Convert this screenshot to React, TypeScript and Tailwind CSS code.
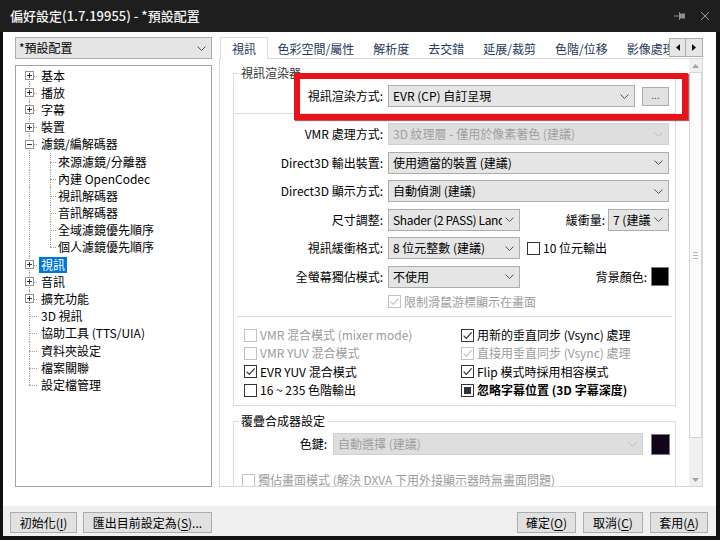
import clsx from "clsx";
import type { ReactNode } from "react";

type CheckState = "off" | "on" | "mixed";

type TreeRow = {
  label: string;
  level: 0 | 1;
  toggle?: "+" | "-";
  selected?: boolean;
  lastChild?: boolean;
};

const TREE: TreeRow[] = [
  { label: "基本", level: 0, toggle: "+" },
  { label: "播放", level: 0, toggle: "+" },
  { label: "字幕", level: 0, toggle: "+" },
  { label: "裝置", level: 0, toggle: "+" },
  { label: "濾鏡/編解碼器", level: 0, toggle: "-" },
  { label: "來源濾鏡/分離器", level: 1 },
  { label: "內建 OpenCodec", level: 1 },
  { label: "視訊解碼器", level: 1 },
  { label: "音訊解碼器", level: 1 },
  { label: "全域濾鏡優先順序", level: 1 },
  { label: "個人濾鏡優先順序", level: 1, lastChild: true },
  { label: "視訊", level: 0, toggle: "+", selected: true },
  { label: "音訊", level: 0, toggle: "+" },
  { label: "擴充功能", level: 0, toggle: "+" },
  { label: "3D 視訊", level: 0 },
  { label: "協助工具 (TTS/UIA)", level: 0 },
  { label: "資料夾設定", level: 0 },
  { label: "檔案關聯", level: 0 },
  { label: "設定檔管理", level: 0 },
];

const TABS = ["色彩空間/屬性", "解析度", "去交錯", "延展/裁剪", "色階/位移", "影像處理"];

const CHECKS: { label: string; state: CheckState; disabled?: boolean; bold?: boolean }[] = [
  { label: "VMR 混合模式 (mixer mode)", state: "off", disabled: true },
  { label: "用新的垂直同步 (Vsync) 處理", state: "on" },
  { label: "VMR YUV 混合模式", state: "off", disabled: true },
  { label: "直接用垂直同步 (Vsync) 處理", state: "on", disabled: true },
  { label: "EVR YUV 混合模式", state: "on" },
  { label: "Flip 模式時採用相容模式", state: "on" },
  { label: "16 ~ 235 色階輸出", state: "off" },
  { label: "忽略字幕位置 (3D 字幕深度)", state: "mixed", bold: true },
];

function Chevron({ disabled }: { disabled?: boolean }) {
  return (
    <svg width="9" height="5" viewBox="0 0 9 5" className="ml-[3px] shrink-0">
      <polyline
        points="0.5,0.5 4.5,4.5 8.5,0.5"
        fill="none"
        stroke={disabled ? "#bdbdbd" : "#555555"}
        strokeWidth="1"
      />
    </svg>
  );
}

function Combo({ text, className, disabled }: { text: string; className?: string; disabled?: boolean }) {
  return (
    <div
      className={clsx(
        "flex h-[22px] shrink-0 items-center border pl-[4px] pr-[5px]",
        disabled ? "border-[#d0d0d0] bg-[#dedede] text-[#a0a0a0]" : "border-[#adadad] bg-[#e5e5e5]",
        className,
      )}
    >
      <span className="flex-1 overflow-hidden whitespace-nowrap">{text}</span>
      <Chevron disabled={disabled} />
    </div>
  );
}

function CheckBox({ state, disabled }: { state: CheckState; disabled?: boolean }) {
  const stroke = disabled ? "#c2c2c2" : "#333333";
  return (
    <span
      className={clsx(
        "relative flex h-[13px] w-[13px] shrink-0 items-center justify-center border bg-white",
        disabled ? "border-[#c2c2c2]" : "border-[#333333]",
      )}
    >
      {state === "on" ? (
        <svg width="11" height="11" viewBox="0 0 11 11">
          <path d="M1.6 5.6 L4.3 8.3 L9.6 2.4" fill="none" stroke={stroke} strokeWidth="1.2" />
        </svg>
      ) : null}
      {state === "mixed" ? <span className="h-[7px] w-[7px] bg-[#333333]" /> : null}
    </span>
  );
}

function CheckItem({
  label,
  state,
  disabled,
  bold,
  className,
}: {
  label: string;
  state: CheckState;
  disabled?: boolean;
  bold?: boolean;
  className?: string;
}) {
  return (
    <div className={clsx("flex items-center gap-[3px] whitespace-nowrap", className)}>
      <CheckBox state={state} disabled={disabled} />
      <span className={clsx(disabled && "text-[#9c9c9c]", bold && "font-bold")}>{label}</span>
    </div>
  );
}

function Swatch({ className }: { className?: string }) {
  return <span className={clsx("block shrink-0 border border-[#7c7c7c]", className)} />;
}

function Button({ children, className }: { children: ReactNode; className?: string }) {
  return (
    <div
      className={clsx(
        "flex h-[21px] items-center justify-center border border-[#adadad] bg-[#e1e1e1] text-[12px]",
        className,
      )}
    >
      {children}
    </div>
  );
}

function Key({ children }: { children: ReactNode }) {
  return <span className="underline underline-offset-2">{children}</span>;
}

function Tree() {
  const last = TREE.length - 1;
  return (
    <div className="mt-[6px] h-[422px] border border-[#a3a3a3] bg-white pt-px">
      {TREE.map((row, i) => (
        <div key={row.label} className="flex h-[17.2px] items-center">
          <div className="relative h-full w-[23px] shrink-0">
            <span
              className={clsx(
                "absolute left-[13px] w-0 border-l border-dotted border-[#a0a0a0]",
                i === 0 ? "top-1/2 bottom-0" : i === last ? "top-0 bottom-1/2" : "top-0 bottom-0",
              )}
            />
            {row.level === 0 ? (
              <span className="absolute left-[13px] top-1/2 w-[8px] border-t border-dotted border-[#a0a0a0]" />
            ) : null}
            {row.toggle ? (
              <span className="absolute left-[9px] top-[4px] h-[9px] w-[9px] border border-[#919191] bg-white">
                <span className="absolute left-[1px] top-[3px] h-px w-[5px] bg-[#333333]" />
                {row.toggle === "+" ? (
                  <span className="absolute left-[3px] top-[1px] h-[5px] w-px bg-[#333333]" />
                ) : null}
              </span>
            ) : null}
          </div>
          {row.level === 1 ? (
            <div className="relative h-full w-[17px] shrink-0">
              <span
                className={clsx(
                  "absolute left-[11px] w-0 border-l border-dotted border-[#a0a0a0]",
                  row.lastChild ? "top-0 bottom-1/2" : "top-0 bottom-0",
                )}
              />
              <span className="absolute left-[11px] top-1/2 w-[6px] border-t border-dotted border-[#a0a0a0]" />
            </div>
          ) : null}
          <span
            className={clsx(
              "whitespace-nowrap px-[2px] leading-[16px]",
              row.selected && "bg-[#0078d7] text-white",
            )}
          >
            {row.label}
          </span>
        </div>
      ))}
    </div>
  );
}

function Tabs() {
  return (
    <div className="flex h-[21px] items-start">
      <div className="flex h-[22px] min-w-0 flex-1 items-end overflow-hidden">
        <div className="relative z-10 ml-px flex h-[22px] shrink-0 items-center whitespace-nowrap border border-b-0 border-[#d9d9d9] bg-white px-[11px] text-[#25395a]">
          視訊
        </div>
        {TABS.map((tab) => (
          <div key={tab} className="flex h-[20px] shrink-0 items-center whitespace-nowrap px-[9.5px] text-[#25395a]">
            {tab}
          </div>
        ))}
      </div>
      <div className="mt-px flex shrink-0">
        <div className="flex h-[19px] w-[17px] items-center justify-center border border-[#adadad] bg-[#e6e6e6]">
          <svg width="4" height="7" viewBox="0 0 4 7">
            <polygon points="4,0 0,3.5 4,7" fill="#111111" />
          </svg>
        </div>
        <div className="flex h-[19px] w-[17px] items-center justify-center border border-l-0 border-[#adadad] bg-[#e6e6e6]">
          <svg width="4" height="7" viewBox="0 0 4 7">
            <polygon points="0,0 4,3.5 0,7" fill="#111111" />
          </svg>
        </div>
      </div>
    </div>
  );
}

function ScrollBar() {
  return (
    <div className="flex w-[13px] shrink-0 flex-col bg-[#f0f0f0]">
      <div className="flex h-[13px] items-center justify-center">
        <svg width="7" height="4" viewBox="0 0 7 4">
          <polygon points="0,4 3.5,0 7,4" fill="#a3a3a3" />
        </svg>
      </div>
      <div className="flex h-[366px] items-center justify-center border border-[#d6d6d6] bg-[#fbfbfb]">
        <div className="flex flex-col gap-[2px]">
          <span className="h-px w-[5px] bg-[#b5b5b5]" />
          <span className="h-px w-[5px] bg-[#b5b5b5]" />
          <span className="h-px w-[5px] bg-[#b5b5b5]" />
        </div>
      </div>
      <div className="flex-1" />
      <div className="flex h-[13px] items-center justify-center">
        <svg width="7" height="4" viewBox="0 0 7 4">
          <polygon points="0,0 3.5,4 7,0" fill="#a3a3a3" />
        </svg>
      </div>
    </div>
  );
}

function RendererGroup() {
  return (
    <fieldset className="ml-[13px] mt-[7px] w-[443px] border border-[#dcdcdc] pb-[6px]">
      <legend className="ml-[5px] px-[2px] leading-[14px] text-[#333333]">視訊渲染器</legend>
      <div className="mt-[5px] flex w-[435px] items-center">
        <span className="w-[149px] shrink-0 text-right">視訊渲染方式:</span>
        <Combo text="EVR (CP) 自訂呈現" className="ml-[5px] w-[247px]" />
        <div className="ml-[7px] flex h-[19px] w-[27px] items-center justify-center border border-[#adadad] bg-[#e1e1e1] pb-[4px] text-[10px] text-[#444444]">
          ...
        </div>
      </div>
      <div className="mt-[6px] h-px bg-[#dcdcdc]" />
      <div className="mt-[9px] flex w-[435px] flex-col gap-[6.6px]">
        <div className="flex items-center">
          <span className="w-[149px] shrink-0 text-right">VMR 處理方式:</span>
          <Combo text="3D 紋理層 - 僅用於像素著色 (建議)" className="ml-[5px] w-[281px]" disabled />
        </div>
        <div className="flex items-center">
          <span className="w-[149px] shrink-0 text-right">Direct3D 輸出裝置:</span>
          <Combo text="使用適當的裝置 (建議)" className="ml-[5px] w-[281px]" />
        </div>
        <div className="flex items-center">
          <span className="w-[149px] shrink-0 text-right">Direct3D 顯示方式:</span>
          <Combo text="自動偵測 (建議)" className="ml-[5px] w-[281px]" />
        </div>
        <div className="flex items-center">
          <span className="w-[149px] shrink-0 text-right">尺寸調整:</span>
          <Combo text="Shader (2 PASS) Lanczos3" className="ml-[5px] w-[132px] tracking-[-0.35px]" />
          <span className="ml-auto whitespace-nowrap">緩衝量:</span>
          <Combo text="7 (建議)" className="ml-[3px] w-[61px]" />
        </div>
        <div className="flex items-center">
          <span className="w-[149px] shrink-0 text-right">視訊緩衝格式:</span>
          <Combo text="8 位元整數 (建議)" className="ml-[5px] w-[132px]" />
          <CheckItem label="10 位元輸出" state="off" className="ml-[7px]" />
        </div>
        <div className="flex items-center">
          <span className="w-[149px] shrink-0 text-right">全螢幕獨佔模式:</span>
          <Combo text="不使用" className="ml-[5px] w-[132px]" />
          <span className="ml-auto whitespace-nowrap">背景顏色:</span>
          <Swatch className="ml-[4px] h-[19px] w-[18px] bg-black" />
        </div>
      </div>
      <CheckItem
        label="限制滑鼠游標顯示在畫面"
        state="on"
        disabled
        className="mt-[7px] h-[14px] pl-[154px]"
      />
      <div className="mx-[3px] mt-[7px] h-px bg-[#dcdcdc]" />
      <div className="mt-[9px] grid grid-cols-[217px_1fr] pl-[10px]">
        {CHECKS.map((c) => (
          <CheckItem
            key={c.label}
            label={c.label}
            state={c.state}
            disabled={c.disabled}
            bold={c.bold}
            className="h-[18.3px]"
          />
        ))}
      </div>
    </fieldset>
  );
}

function OverlayGroup() {
  return (
    <fieldset className="ml-[13px] mt-[8px] w-[443px] border border-[#dcdcdc] pb-[20px]">
      <legend className="ml-[5px] px-[2px] leading-[14px]">覆疊合成器設定</legend>
      <div className="mt-[5px] flex items-center">
        <span className="w-[93px] shrink-0 text-right">色鍵:</span>
        <Combo text="自動選擇 (建議)" className="ml-[6px] w-[310px]" disabled />
        <Swatch className="ml-[8px] h-[21px] w-[19px] bg-[#12041a]" />
      </div>
      <CheckItem
        label="獨佔畫面模式 (解決 DXVA 下用外接顯示器時無畫面問題)"
        state="off"
        disabled
        className="mt-[18px] h-[14px] pl-[8px]"
      />
    </fieldset>
  );
}

export default function App() {
  return (
    <div className="relative flex h-[540px] w-[720px] flex-col overflow-hidden bg-[#111111] font-['Noto_Sans_CJK_TC','Noto_Sans',sans-serif] text-[12px] text-black">
      <div className="flex h-[32px] shrink-0 items-center bg-[#1e1e1e] pl-[10px] pr-[10px]">
        <span className="flex-1 text-[13px] font-medium text-[#f2f2f2]">偏好設定(1.7.19955) - *預設配置</span>
        <svg width="12" height="10" viewBox="0 0 12 10" className="mr-[14px]">
          <line x1="0" y1="5" x2="5" y2="5" stroke="#8c8c8c" strokeWidth="1" />
          <line x1="5.5" y1="1" x2="5.5" y2="9" stroke="#8c8c8c" strokeWidth="1" />
          <rect x="6" y="2.5" width="5" height="5" fill="#8c8c8c" />
        </svg>
        <svg width="10" height="10" viewBox="0 0 10 10">
          <path d="M1 1 L9 9 M9 1 L1 9" stroke="#9a9a9a" strokeWidth="1" />
        </svg>
      </div>
      <div className="mb-[4px] ml-[3px] mr-[4px] flex flex-1 flex-col bg-white">
        <div className="flex h-[455px] pl-[12px] pr-[13px] pt-[5px]">
          <div className="flex w-[197px] shrink-0 flex-col">
            <div className="flex h-[22px] items-center border border-[#adadad] bg-[#e5e5e5] pl-[3px] pr-[5px]">
              <span className="flex-1">*預設配置</span>
              <Chevron />
            </div>
            <Tree />
          </div>
          <div className="ml-[7px] flex w-[484px] shrink-0 flex-col">
            <Tabs />
            <div className="flex h-[429px] border border-[#d9d9d9] bg-white">
              <div className="flex-1 overflow-hidden">
                <RendererGroup />
                <OverlayGroup />
              </div>
              <ScrollBar />
            </div>
          </div>
        </div>
        <div className="h-[19px]" />
        <div className="flex flex-1 items-start bg-[#f0f0f0] pl-[7px] pr-[8px] pt-[6px]">
          <Button className="w-[67px]">
            初始化(<Key>I</Key>)
          </Button>
          <Button className="ml-[6px] w-[129px]">
            匯出目前設定為(<Key>S</Key>)...
          </Button>
          <div className="flex-1" />
          <Button className="w-[59px]">
            確定(<Key>O</Key>)
          </Button>
          <Button className="ml-[7px] w-[60px]">
            取消(<Key>C</Key>)
          </Button>
          <Button className="ml-[7px] w-[58px]">
            套用(<Key>A</Key>)
          </Button>
        </div>
      </div>
      <div className="absolute left-[294px] top-[73px] h-[47px] w-[394px] border-[6px] border-[#e8121a] shadow-[1px_1px_1px_rgba(90,0,0,0.6)]" />
    </div>
  );
}
